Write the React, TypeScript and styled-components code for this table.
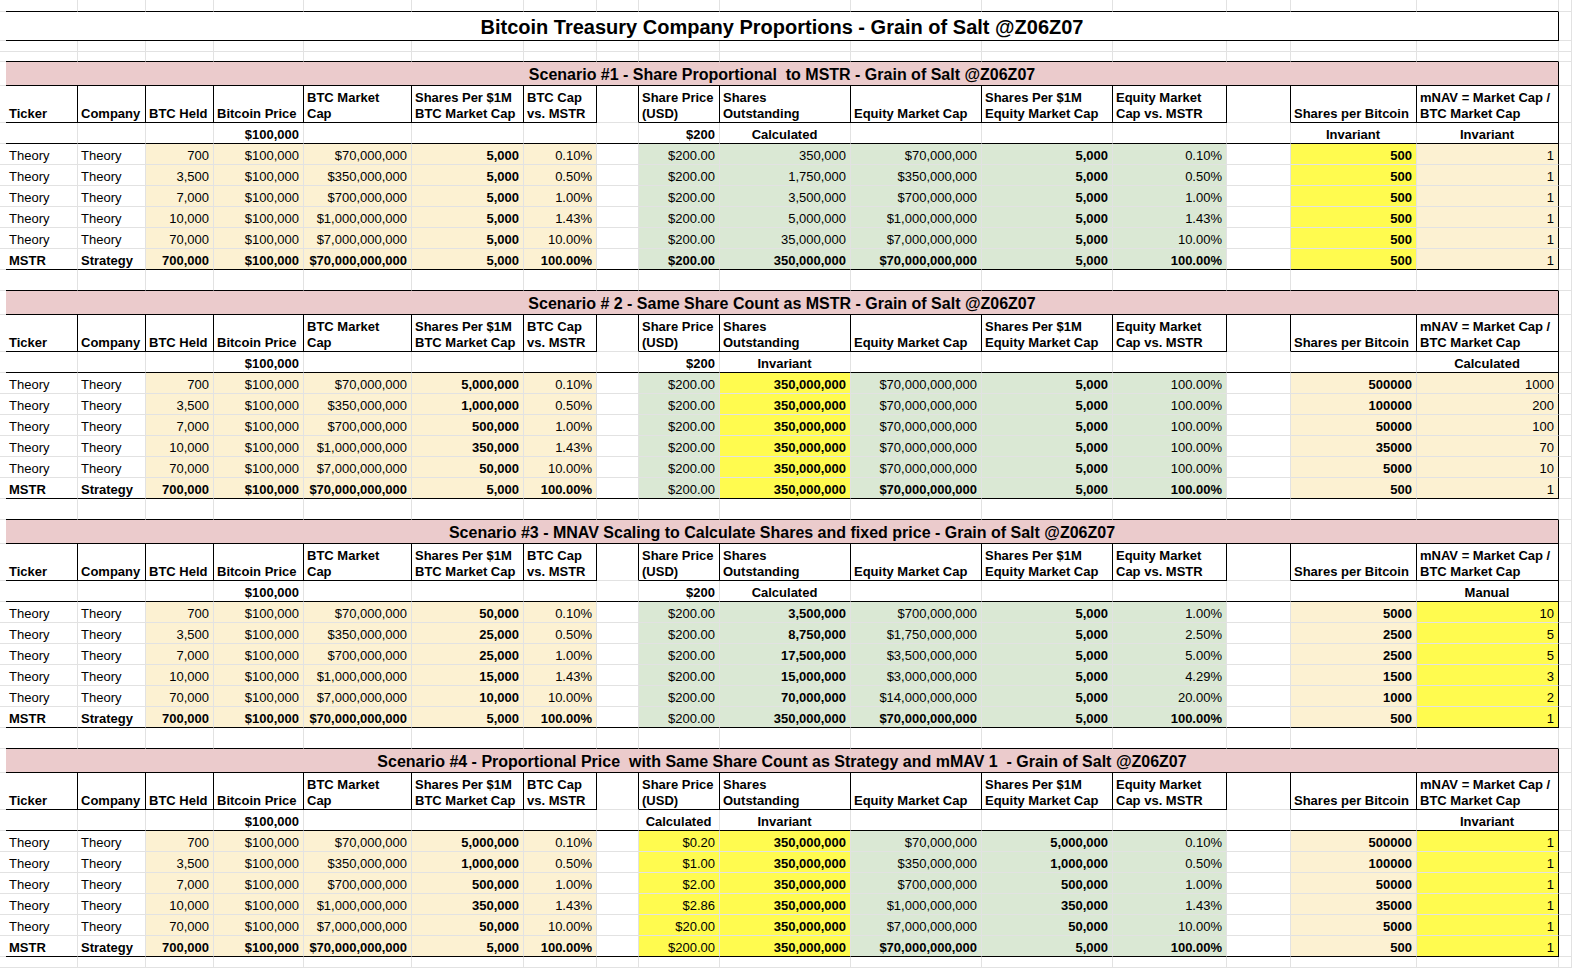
import React from "react";
import styled, { createGlobalStyle } from "styled-components";

const COLS = [6, 72, 68, 68, 90, 108, 112, 73, 42, 81, 131, 131, 131, 114, 64, 126, 142, 13];
const TEMPLATE = COLS.map((w) => `${w}px`).join(" ");

type Fill = "none" | "pink" | "tan" | "green" | "yellow";
type Align = "left" | "right" | "center";

const FILLS: Record<Fill, string> = {
  none: "#ffffff",
  pink: "#ebcbcc",
  tan: "#fcf1d2",
  green: "#dae8d4",
  yellow: "#fffb4f",
};

const GRID = "#e2e2e2";
const INK = "#000000";

const GlobalStyle = createGlobalStyle`
  html, body { margin: 0; padding: 0; background: #fff; overflow: hidden; }
  body { font-family: "Liberation Sans", Arial, Helvetica, sans-serif; color: #000; }
`;

const Sheet = styled.div`
  width: 1572px;
  height: 968px;
  overflow: hidden;
  display: flex;
  flex-direction: column;
`;

const Row = styled.div<{ $h: number }>`
  display: grid;
  grid-template-columns: ${TEMPLATE};
  height: ${(p) => p.$h}px;
  flex: none;
`;

const Cell = styled.div<{
  $span?: number;
  $fill?: Fill;
  $align?: Align;
  $bold?: boolean;
  $r?: boolean;
  $b?: boolean;
}>`
  box-sizing: border-box;
  grid-column: span ${(p) => p.$span ?? 1};
  background: ${(p) => FILLS[p.$fill ?? "none"]};
  border-right: 1px solid ${(p) => (p.$r ? INK : GRID)};
  border-bottom: 1px solid ${(p) => (p.$b ? INK : GRID)};
  display: flex;
  align-items: center;
  justify-content: ${(p) =>
    p.$align === "right" ? "flex-end" : p.$align === "center" ? "center" : "flex-start"};
  padding: 3px 4px 0 3px;
  font-size: 13px;
  font-weight: ${(p) => (p.$bold ? 700 : 400)};
  white-space: nowrap;
  overflow: hidden;
  min-width: 0;
`;

const HeaderCell = styled(Cell)`
  align-items: flex-end;
  font-weight: 700;
  line-height: 16px;
  white-space: pre-line;
  padding: 0 3px 0 3px;
`;

const TitleCell = styled(Cell)`
  justify-content: center;
  font-size: 20px;
  font-weight: 700;
  padding: 2px 0 0 0;
`;

const BarCell = styled(Cell)`
  justify-content: center;
  font-size: 16px;
  font-weight: 700;
  white-space: pre;
  padding: 3px 0 0 0;
`;

/* ---------- data ---------- */

type Spec = { v: string; bold?: boolean; fill?: Fill; align?: Align };

const btcHeld = ["700", "3,500", "7,000", "10,000", "70,000", "700,000"];
const btcCap = [
  "$70,000,000",
  "$350,000,000",
  "$700,000,000",
  "$1,000,000,000",
  "$7,000,000,000",
  "$70,000,000,000",
];
const btcPct = ["0.10%", "0.50%", "1.00%", "1.43%", "10.00%", "100.00%"];
const six = (v: string) => Array.from({ length: 6 }, () => v);
const perMBig = ["5,000,000", "1,000,000", "500,000", "350,000", "50,000", "5,000"];
const spbBig = ["500000", "100000", "50000", "35000", "5000", "500"];

type Scenario = {
  title: string;
  sub9: Spec;
  sub10: string;
  sub15: string;
  sub16: string;
  perM: string[];
  price: string[];
  priceFill: Fill;
  priceBoldM: boolean;
  shares: string[];
  sharesFill: Fill;
  sharesBoldAll: boolean;
  eqCap: string[];
  eqPerM: string[];
  eqPct: string[];
  spb: string[];
  spbFill: Fill;
  mnav: string[];
  mnavFill: Fill;
};

const SCENARIOS: Scenario[] = [
  {
    title: "Scenario #1 - Share Proportional  to MSTR - Grain of Salt @Z06Z07",
    sub9: { v: "$200", align: "right" },
    sub10: "Calculated",
    sub15: "Invariant",
    sub16: "Invariant",
    perM: six("5,000"),
    price: six("$200.00"),
    priceFill: "green",
    priceBoldM: true,
    shares: ["350,000", "1,750,000", "3,500,000", "5,000,000", "35,000,000", "350,000,000"],
    sharesFill: "green",
    sharesBoldAll: false,
    eqCap: btcCap,
    eqPerM: six("5,000"),
    eqPct: btcPct,
    spb: six("500"),
    spbFill: "yellow",
    mnav: six("1"),
    mnavFill: "tan",
  },
  {
    title: "Scenario # 2 - Same Share Count as MSTR - Grain of Salt @Z06Z07",
    sub9: { v: "$200", align: "right" },
    sub10: "Invariant",
    sub15: "",
    sub16: "Calculated",
    perM: perMBig,
    price: six("$200.00"),
    priceFill: "green",
    priceBoldM: false,
    shares: six("350,000,000"),
    sharesFill: "yellow",
    sharesBoldAll: true,
    eqCap: six("$70,000,000,000"),
    eqPerM: six("5,000"),
    eqPct: six("100.00%"),
    spb: spbBig,
    spbFill: "tan",
    mnav: ["1000", "200", "100", "70", "10", "1"],
    mnavFill: "tan",
  },
  {
    title:
      "Scenario #3 - MNAV Scaling to Calculate Shares and fixed price - Grain of Salt @Z06Z07",
    sub9: { v: "$200", align: "right" },
    sub10: "Calculated",
    sub15: "",
    sub16: "Manual",
    perM: ["50,000", "25,000", "25,000", "15,000", "10,000", "5,000"],
    price: six("$200.00"),
    priceFill: "green",
    priceBoldM: false,
    shares: ["3,500,000", "8,750,000", "17,500,000", "15,000,000", "70,000,000", "350,000,000"],
    sharesFill: "green",
    sharesBoldAll: true,
    eqCap: [
      "$700,000,000",
      "$1,750,000,000",
      "$3,500,000,000",
      "$3,000,000,000",
      "$14,000,000,000",
      "$70,000,000,000",
    ],
    eqPerM: six("5,000"),
    eqPct: ["1.00%", "2.50%", "5.00%", "4.29%", "20.00%", "100.00%"],
    spb: ["5000", "2500", "2500", "1500", "1000", "500"],
    spbFill: "tan",
    mnav: ["10", "5", "5", "3", "2", "1"],
    mnavFill: "yellow",
  },
  {
    title:
      "Scenario #4 - Proportional Price  with Same Share Count as Strategy and mMAV 1  - Grain of Salt @Z06Z07",
    sub9: { v: "Calculated", align: "center" },
    sub10: "Invariant",
    sub15: "",
    sub16: "Invariant",
    perM: perMBig,
    price: ["$0.20", "$1.00", "$2.00", "$2.86", "$20.00", "$200.00"],
    priceFill: "yellow",
    priceBoldM: false,
    shares: six("350,000,000"),
    sharesFill: "yellow",
    sharesBoldAll: true,
    eqCap: btcCap,
    eqPerM: perMBig,
    eqPct: btcPct,
    spb: spbBig,
    spbFill: "tan",
    mnav: six("1"),
    mnavFill: "yellow",
  },
];

const HEADERS = [
  "Ticker",
  "Company",
  "BTC Held",
  "Bitcoin Price",
  "BTC Market\nCap",
  "Shares Per $1M\nBTC Market Cap",
  "BTC Cap\nvs. MSTR",
  "",
  "Share Price\n(USD)",
  "Shares\nOutstanding",
  "Equity Market Cap",
  "Shares Per $1M\nEquity Market Cap",
  "Equity Market\nCap vs. MSTR",
  "",
  "Shares per Bitcoin",
  "mNAV = Market Cap /\nBTC Market Cap",
];

function dataCells(s: Scenario, i: number): Spec[] {
  const m = i === 5;
  return [
    { v: m ? "MSTR" : "Theory", bold: m, align: "left" },
    { v: m ? "Strategy" : "Theory", bold: m, align: "left" },
    { v: btcHeld[i], bold: m, fill: "tan", align: "right" },
    { v: "$100,000", bold: m, fill: "tan", align: "right" },
    { v: btcCap[i], bold: m, fill: "tan", align: "right" },
    { v: s.perM[i], bold: true, fill: "tan", align: "right" },
    { v: btcPct[i], bold: m, fill: "tan", align: "right" },
    { v: "" },
    { v: s.price[i], bold: m && s.priceBoldM, fill: s.priceFill, align: "right" },
    { v: s.shares[i], bold: m || s.sharesBoldAll, fill: s.sharesFill, align: "right" },
    { v: s.eqCap[i], bold: m, fill: "green", align: "right" },
    { v: s.eqPerM[i], bold: true, fill: "green", align: "right" },
    { v: s.eqPct[i], bold: m, fill: "green", align: "right" },
    { v: "" },
    { v: s.spb[i], bold: true, fill: s.spbFill, align: "right" },
    { v: s.mnav[i], bold: false, fill: s.mnavFill, align: "right" },
  ];
}

/* ---------- rows ---------- */

function BlankRow({ h, boxBelow }: { h: number; boxBelow?: boolean }) {
  return (
    <Row $h={h}>
      <Cell />
      {Array.from({ length: 16 }, (_, k) => (
        <Cell key={k} $b={boxBelow} />
      ))}
      <Cell />
    </Row>
  );
}

function Block({ s, last }: { s: Scenario; last: boolean }) {
  const subs: Spec[] = [
    { v: "" },
    { v: "" },
    { v: "" },
    { v: "$100,000", align: "right", bold: true },
    { v: "" },
    { v: "" },
    { v: "" },
    { v: "" },
    { ...s.sub9, bold: true },
    { v: s.sub10, align: "center", bold: true },
    { v: "" },
    { v: "" },
    { v: "" },
    { v: "" },
    { v: s.sub15, align: "center", bold: true },
    { v: s.sub16, align: "center", bold: true },
  ];
  return (
    <>
      <Row $h={24}>
        <Cell $r />
        <BarCell $span={16} $fill="pink" $r $b>
          {s.title}
        </BarCell>
        <Cell />
      </Row>
      <Row $h={37}>
        <Cell $r />
        {HEADERS.map((t, k) => (
          <HeaderCell key={k} $r $b={k !== 7 && k !== 13}>
            {t}
          </HeaderCell>
        ))}
        <Cell />
      </Row>
      <Row $h={21}>
        <Cell $r />
        {subs.map((c, k) => (
          <Cell key={k} $b $r={k === 15} $align={c.align} $bold={c.bold}>
            {c.v}
          </Cell>
        ))}
        <Cell />
      </Row>
      {Array.from({ length: 6 }, (_, i) => (
        <Row $h={21} key={i}>
          <Cell $r />
          {dataCells(s, i).map((c, k) => (
            <Cell
              key={k}
              $fill={c.fill}
              $align={c.align}
              $bold={c.bold}
              $r={k === 15}
              $b={i === 5}
            >
              {c.v}
            </Cell>
          ))}
          <Cell />
        </Row>
      ))}
      {last ? <BlankRow h={11} /> : <BlankRow h={21} boxBelow />}
    </>
  );
}

export default function App() {
  return (
    <>
      <GlobalStyle />
      <Sheet>
        <BlankRow h={12} boxBelow />
        <Row $h={29}>
          <Cell $r />
          <TitleCell $span={16} $r $b>
            Bitcoin Treasury Company Proportions - Grain of Salt @Z06Z07
          </TitleCell>
          <Cell />
        </Row>
        <BlankRow h={11} />
        <BlankRow h={10} boxBelow />
        {SCENARIOS.map((s, k) => (
          <Block key={k} s={s} last={k === SCENARIOS.length - 1} />
        ))}
      </Sheet>
    </>
  );
}
